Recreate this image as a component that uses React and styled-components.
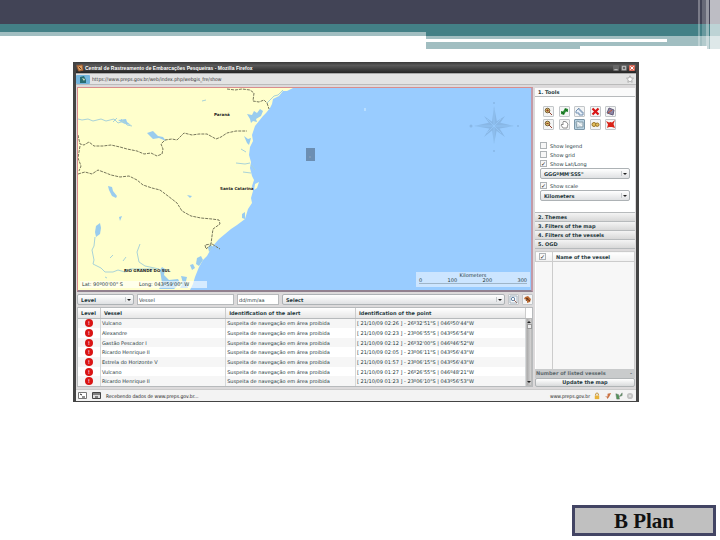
import React from 'react'
import styled, { createGlobalStyle } from 'styled-components'

const GlobalStyle = createGlobalStyle`
    * {
        box-sizing: border-box;
    }
    body {
        margin: 0;
        background: #fff;
    }
    input, select, button {
        font: inherit;
        color: inherit;
        margin: 0;
    }
`

/* ---------- slide ---------- */

const Slide = styled.div`
    min-height: 100vh;
    display: flex;
    flex-direction: column;
    font-family: "DejaVu Sans", sans-serif;
    font-size: 5px;
    line-height: 8px;
    color: #26393d;
`
const Banner = styled.header`
    position: relative;
    height: 62px;
`
const NavyBand = styled.div`
    height: 24px;
    background: #424456;
`
const BandRow = styled.div`
    display: flex;
`
const BandLeft = styled.div`
    width: 426px;
    height: 12px;
    background: #438086;
    border-bottom: 4px solid #a1bec1;
`
const BandRight = styled.div`
    flex: 1;
    height: 22px;
    background: #a1bec1;
    border-top: 12px solid #438086;
    padding-top: 3px;
`
const WhiteLine = styled.div`
    width: 82%;
    height: 3px;
    background: #fff;
`
const BandTail = styled.div`
    display: flex;
    justify-content: space-between;
    height: 3px;
    margin-left: 426px;
`
const Tail = styled.div`
    width: ${(p) => p.$w}px;
    background: #a1bec1;
`
const Stripes = styled.div`
    position: absolute;
    top: 0;
    right: 0;
    width: 22px;
    height: 49px;
    display: flex;
`
const Stripe = styled.div`
    width: ${(p) => p.$w}px;
    background: rgba(255, 255, 255, ${(p) => p.$o});
`
const Footer = styled.footer`
    display: flex;
    justify-content: flex-end;
    margin-top: auto;
    padding: 0 4px 4px;
`
const PlanButton = styled.button`
    width: 144px;
    height: 31px;
    padding: 0;
    border: 3px solid #424463;
    background: #c0c0c0;
    color: #111;
    font: bold 21px/24px "Liberation Serif", serif;
`

/* ---------- browser window ---------- */

const Window = styled.main`
    margin: 0 81px 0 73px;
    border: 1px solid #444;
    border-top: 0;
    border-left: 3px solid #444;
    border-right: 3px solid #444;
    background: #dedede;
`
const TitleBar = styled.div`
    height: 11px;
    display: flex;
    align-items: center;
    gap: 1px;
    background: linear-gradient(#383838, #5a5a5a 30%, #252525);
    color: #fff;
    font: bold 5px/10px "Liberation Sans", sans-serif;
`
const Grow = styled.span`
    flex: 1;
`
const WindowButton = styled.button`
    width: 6px;
    height: 6px;
    margin-right: 1px;
    padding: 0;
    border: 0;
    border-radius: 1px;
    background: ${(p) => (p.$close ? '#dc6a58' : '#666')};
    display: flex;
`
const AddressBar = styled.div`
    height: 12px;
    display: flex;
    align-items: center;
    gap: 2px;
    padding: 0 2px 0 0;
    border-top: 1px solid #aaa;
    border-bottom: 1px solid #bbb;
    background: #e3e3e3;
`
const Address = styled.input`
    flex: 1;
    min-width: 0;
    height: 9px;
    padding: 0;
    border: 0;
    background: transparent;
    color: #333;
    font: 5px/9px "DejaVu Sans Condensed", "DejaVu Sans", sans-serif;
`
const Content = styled.div`
    display: grid;
    grid-template-columns: minmax(0, 1fr) 100px;
    column-gap: 2px;
    padding: 2px 1px;
    background: #dcdadb;
`
const StatusBar = styled.div`
    height: 12px;
    display: flex;
    align-items: center;
    gap: 5px;
    padding: 0 2px;
    border-top: 1px solid #ccc;
    background: #f3f3f3;
    color: #222;
    font: 5px/10px "DejaVu Sans Condensed", "DejaVu Sans", sans-serif;
`
const StatusIcons = styled.span`
    display: flex;
    align-items: center;
    gap: 3px;
`

/* ---------- map ---------- */

const MapFrame = styled.section`
    position: relative;
    height: 205px;
    border: 1px solid #d98d8d;
    border-right: 2px solid #c39aa8;
    border-bottom: 2px solid #91808e;
    background: #99ccff;
`
const MapDrawing = styled.svg`
    display: block;
    width: 100%;
    height: 100%;
`
const Coordinates = styled.div`
    position: absolute;
    left: 2px;
    bottom: 2px;
    width: 127px;
    height: 7px;
    padding: 0 2px;
    display: flex;
    gap: 16px;
    background: rgba(255, 255, 255, 0.6);
    line-height: 7px;
`
const Scale = styled.div`
    position: absolute;
    right: 1px;
    bottom: 3px;
    width: 114px;
    height: 15px;
    padding: 0 3px;
    background: #cce5ff;
    text-align: center;
    line-height: 6px;
`
const ScaleNumbers = styled.div`
    display: flex;
    justify-content: space-between;
    height: 6px;
    border-bottom: 1px solid #9eb5c9;
    line-height: 5px;
`

/* ---------- controls ---------- */

const Filters = styled.form`
    display: flex;
    gap: 3px;
    padding: 2px 0;
`
const SelectBox = styled.div`
    position: relative;
    ${(p) => (p.$w ? `width: ${p.$w}px;` : 'flex: 1;')}
    height: 11px;
    margin-top: ${(p) => p.$gap || 0}px;
    &::before {
        content: '';
        position: absolute;
        right: 8px;
        top: 3px;
        height: 5px;
        border-left: 1px solid #c4c8cb;
    }
    &::after {
        content: '';
        position: absolute;
        right: 3px;
        top: 5px;
        border: 2px solid transparent;
        border-top: 2px solid #222;
        border-bottom: 0;
    }
`
const Select = styled.select`
    display: block;
    width: 100%;
    height: 11px;
    padding: 0 3px;
    appearance: none;
    border: 1px solid #adb2b5;
    border-radius: 2px;
    background: linear-gradient(#fff, #dfe1e3);
    font-weight: bold;
    line-height: 8px;
`
const TextBox = styled.input`
    width: ${(p) => p.$w}px;
    height: 11px;
    padding: 0 1px;
    border: 1px solid #b7babc;
    background: #fff;
`
const IconButton = styled.button`
    width: 11px;
    height: 11px;
    padding: 0;
    display: flex;
    align-items: center;
    justify-content: center;
    border: 1px solid ${(p) => (p.$on ? '#7c97a8' : '#c2c6c9')};
    border-radius: 1px;
    background: ${(p) => (p.$on ? '#b9d2e2' : '#f4f5f5')};
`

/* ---------- alerts ---------- */

const AlertsBox = styled.div`
    display: flex;
    height: 80px;
    border: 1px solid #b7babc;
    background: #fff;
`
const AlertTable = styled.table`
    flex: 1;
    min-width: 0;
    height: 78px;
    table-layout: fixed;
    border-collapse: collapse;
    th {
        height: 10px;
        padding: 0 3px;
        background: linear-gradient(#fff, #e6e6e6);
        border-bottom: 1px solid #b7babc;
        border-right: 1px solid #ccc;
        line-height: 8px;
        text-align: left;
        white-space: nowrap;
    }
    td {
        padding: 0 1px;
        border-right: 1px solid #d5d8da;
        line-height: 8px;
        white-space: nowrap;
    }
    tbody tr:nth-child(odd) {
        background: #f6f6f6;
    }
`
const Col = styled.col`
    width: ${(p) => p.$w}%;
`
const AlertDot = styled.div`
    width: 8px;
    height: 8px;
    margin: 0 auto;
    border-radius: 50%;
    background: #d91414;
    color: #ffc9c9;
    font-weight: bold;
    line-height: 8px;
    text-align: center;
`
const ScrollBar = styled.div`
    width: 6px;
    margin-top: 10px;
    display: flex;
    flex-direction: column;
    justify-content: space-between;
    align-items: center;
    padding: 2px 0;
    border: 1px solid #bbb;
    background: linear-gradient(90deg, #aaa, #d4d4d4);
`
const ScrollThumb = styled.div`
    width: 5px;
    height: 5px;
    margin: 1px 0 auto;
    border: 1px solid #999;
    background: #eee;
`
const ScrollArrow = styled.div`
    border: 2px solid transparent;
    border-${(p) => (p.$up ? 'bottom' : 'top')}-color: #222;
    border-${(p) => (p.$up ? 'top' : 'bottom')}: 0;
`

/* ---------- sidebar ---------- */

const Sidebar = styled.aside`
    display: flex;
    flex-direction: column;
    padding-top: 1px;
`
const SectionHead = styled.button`
    height: 9px;
    padding: 0 3px;
    border: 0;
    border-bottom: 1px solid #b7babc;
    background: ${(p) => (p.$open ? '#fafafa' : 'linear-gradient(#f4f4f4, #d8d8d8)')};
    font-weight: bold;
    line-height: 8px;
    text-align: left;
`
const Tools = styled.div`
    height: 116px;
    padding: 9px 5px 0;
    background: #fff;
    border-bottom: 1px solid #b7babc;
`
const ToolGrid = styled.div`
    display: grid;
    grid-template-columns: repeat(5, 11px);
    justify-content: space-between;
    row-gap: 2px;
    padding: 0 14px 11px 3px;
`
const CheckLine = styled.label`
    display: flex;
    align-items: center;
    gap: 3px;
    height: 9px;
    margin-top: ${(p) => p.$gap || 0}px;
`
const Check = styled.input.attrs({ type: 'checkbox' })`
    appearance: none;
    width: 7px;
    height: 7px;
    border: 1px solid #aeb3b6;
    background: #f7f7f7;
    &:checked::before {
        content: '✓';
        display: block;
        color: #222;
        font: bold 6px/5px "DejaVu Sans", sans-serif;
    }
`
const VesselTable = styled.table`
    height: 118px;
    margin-top: 2px;
    border-collapse: collapse;
    table-layout: fixed;
    background: #fff;
    th {
        height: 10px;
        padding: 0 3px;
        background: linear-gradient(#fff, #f0f0f0);
        border: 1px solid #ccc;
        text-align: left;
        white-space: nowrap;
        line-height: 8px;
    }
    td {
        padding: 0;
        border-right: 1px solid #ccc;
    }
    tbody tr:nth-child(odd) {
        background: #f7f7f7;
    }
    th:first-child {
        width: 17px;
    }
`
const Listed = styled.div`
    height: 9px;
    padding: 0 3px 0 1px;
    display: flex;
    justify-content: space-between;
    background: #c9cbcc;
    color: #5d686c;
    font-weight: bold;
`
const UpdateButton = styled.button`
    height: 9px;
    padding: 0;
    border: 1px solid #b0b4b6;
    border-radius: 2px;
    background: linear-gradient(#fff, #d9dbdc);
    font-weight: bold;
    line-height: 7px;
`

const Svg = ({ size = 9, children }) => (
    <svg width={size} height={size} viewBox="0 0 9 9" fill="none">{children}</svg>
)

const glyphs = {
    zoomIn: <Svg><circle cx="3.5" cy="3.5" r="2.3" fill="#d9bd68" stroke="#76613a" /><path d="M5 5l3 3M3.5 2.4v2.2M2.4 3.5h2.2" stroke="#943d2a" /></Svg>,
    refresh: <Svg><path d="M5 1l3 1v3L6 4.500 5 6l-1 2-3-1V4l2 .5L4 3z" fill="#278b31" /><path d="M2 5l2 2M5 2l2 2" stroke="#165c24" /></Svg>,
    move: <Svg><path d="M1 4l3-3v2h2v2h2v3H4V6H1z" fill="#e9f1fa" stroke="#7390b1" /></Svg>,
    cross: <Svg><path d="M1.5 1.5l6 6M7.5 1.5l-6 6" stroke="#d81515" strokeWidth="2.2" /></Svg>,
    layers: <Svg><path d="M3 1l5 2-1 5-6-2z" fill="#8e86a5" stroke="#635c7a" /><path d="M2 6l4-3" stroke="#c8502e" /></Svg>,
    zoomOut: <Svg><circle cx="3.5" cy="3.5" r="2.3" fill="#d9bd68" stroke="#76613a" /><path d="M5 5l3 3M2.4 3.5h2.2" stroke="#943d2a" /></Svg>,
    hand: <Svg><path d="M3 8L1 5l1-1 1 1V2l1-1 1 1 1-.5L7 3l1 1-1 4z" fill="#fff" stroke="#777" strokeWidth=".8" /></Svg>,
    select: <Svg><path d="M1 2l2-1 1 1h4v5H4L2 8z" fill="#d8e3e9" stroke="#78909c" strokeWidth=".8" /><path d="M3 3l4 3" stroke="#fff" /></Svg>,
    link: <Svg><circle cx="3" cy="4.5" r="2" fill="#e3bf5c" stroke="#9a7428" /><circle cx="6.3" cy="4.7" r="1.7" fill="#e3bf5c" stroke="#9a7428" /></Svg>,
    target: <Svg><path d="M0 1l3 1.500L4.500 2 6 2.500 9 0 7.500 4 9 8 6 7H3L1 8l1-3.500z" fill="#d92318" /></Svg>,
}

const tools = [
    ['zoomIn', 'Zoom in'], ['refresh', 'Refresh'], ['move', 'Measure'], ['cross', 'Clear'], ['layers', 'Layers'],
    ['zoomOut', 'Zoom out'], ['hand', 'Pan'], ['select', 'Select'], ['link', 'Find'], ['target', 'Remove'],
]

const alerts = [
    ['Vulcano', `[ 21/10/09 02:26 ] - 26º32'51"S | 046º50'44"W`],
    ['Alexandre', `[ 21/10/09 02:23 ] - 23º06'55"S | 043º56'54"W`],
    ['Gastão Pescador I', `[ 21/10/09 02:12 ] - 26º32'00"S | 046º46'52"W`],
    ['Ricardo Henrique II', `[ 21/10/09 02:05 ] - 23º06'11"S | 043º56'43"W`],
    ['Estrela do Horizonte V', `[ 21/10/09 01:57 ] - 23º06'15"S | 043º56'43"W`],
    ['Vulcano', `[ 21/10/09 01:27 ] - 26º26'55"S | 046º48'21"W`],
    ['Ricardo Henrique II', `[ 21/10/09 01:23 ] - 23º06'10"S | 043º56'53"W`],
]

const CoastMap = () => (
    <MapDrawing viewBox="78 88 453 202" preserveAspectRatio="xMinYMin slice">
        <path fill="#ffffcc" d="M78 88H293L287 91 283 91 279 96 273 99 272 104 270 108 266 113 263 116 259 121 255 126 252 135 253 141 250 147 249 155 251 162 250 168 252 176 254 180 252 186 253 191 251 198 252 203 248 209 245 219 237 225 231 229 225 234 219 239 212 247 207 256 203 260 199 267 195 277 193 284 190 290H78z" />
        <g fill="#99ccee">
            <path d="M247 114l5 1 2-4 3 2 3-4 3 2-2 5-5 3 1 3-4-1-2 2-1-4z" />
            <path d="M244 136l4 3 3-1-2 7-2-2z" />
            <path d="M108 186l4 1 1 4 4 5-1 2-4-2-3-6z" />
            <path d="M96 226l4-3 1 5-1 6-4 3-1-5z" />
            <path d="M119 217l3-1-2 5z" />
            <path d="M147 133l6-2 5 5 5 1 3 4-7-3-6 1z" />
            <path d="M197 258l4-2 2 4-4 6-3-2z" />
            <path d="M190 265l3-1 2 4-3 2z" />
            <path d="M208 247l3-2 2 2-4 5z" />
            <path d="M181 276l6 1-1 4 2 7h-8l3-5z" />
            <path d="M160 270l2-3 3 2-1 6 5 5 9-1 2 4-6 6h-15l3-6z" />
            <path d="M242 214l3-2v7l-3-1z" />
            <path d="M255 184l4-2-2 6-3 2z" fill="#ffffcc" />
            <path d="M187 195l5 1-2 2z" />
            <path d="M118 120l8-1 1 3 4 3-6-1-4-2z" />
        </g>
        <g fill="none" stroke="#a9d3d8" strokeWidth="1">
            <path d="M78 119l4 1 6-1 5 2 8-2 5 2 8-2 4 4 6-2 3 4 5 1M121 119l5 5M113 122l4-4" />
            <path d="M95 237l-1 9-2 4 2 10-1 4 8 4 4 4h8l5-2 7 2 5-3h24M140 244l-3 8 2 10 6 4 14 3" />
            <path d="M267 103l7-7 4-1 5-5M241 149l5 3M236 163l9 1 5-1M251 165l4 5" />
            <path d="M110 258l3-3M123 261l3-4M105 277l2 1M202 101l4-1M243 172l8 1" />
        </g>
        <g fill="none" stroke="#77775b" strokeWidth="1" strokeDasharray="3 1">
            <path d="M227 89l8 1 7-1 8 1 4 3-1 8 6 1 5-2 3 3 2 6" />
            <path d="M78 135l2 9 4 1 5-3 5 4 9 0 8-1 9 2 7 2 10 2 7 3 7-1 6 3 5-2 1-5-2-5 4-4 7-1 5 1 7-7 8 2 7-1 8 0 9 5 5-2 6-4 9-2 11 0" />
            <path d="M80 146l-2 12 3 8-2 5" />
            <path d="M78 174l7-2 7 2 6-4 8 3 5 2 9 2 9-1 8 4 6 5 9 3 8 2 8 6 9 7 5 8 9 5 10 2 11 1 7 1 1 4-7 5-1 7-1 8-6 1 1 4 6-5 8 5" />
        </g>
        <rect x="306" y="148" width="9" height="13" fill="#6c8eb2" />
        <path d="M309 157h2" stroke="#91a5ba" />
        <path d="M365 108v3" stroke="#b8deff" strokeWidth="2" />
        <g fill="#88b7e6">
            <path d="M494 106l3 16 17 4-17 3-3 15-2-15-18-3 18-4z" />
            <path d="M484 116l10 7 11-7-7 10 7 11-11-8-10 8 7-11z" />
            <circle cx="494" cy="103" r="1" /><circle cx="494" cy="151" r="1" />
            <circle cx="471" cy="126" r="1.500" /><circle cx="518" cy="126" r="1" />
        </g>
        <path d="M494 109v33M476 126h36M487 119l14 14M501 119l-14 14" stroke="#99ccff" strokeWidth=".6" />
        <g fill="#222" fontSize="4" fontWeight="bold">
            <text x="214" y="116">Paraná</text>
            <text x="220" y="190">Santa Catarina</text>
            <text x="124" y="272">RIO GRANDE DO SUL</text>
        </g>
    </MapDrawing>
)

const App = () => {
    return (
        <Slide>
            <GlobalStyle />
            <Banner>
                <NavyBand />
                <BandRow>
                    <BandLeft />
                    <BandRight>
                        <WhiteLine />
                    </BandRight>
                </BandRow>
                <BandTail>
                    <Tail $w={154} />
                    <Tail $w={13} />
                </BandTail>
                <Stripes>
                    <Stripe $w={2} $o={0.3} />
                    <Stripe $w={2} $o={0} />
                    <Stripe $w={4} $o={0.2} />
                    <Stripe $w={3} $o={0.45} />
                    <Stripe $w={1} $o={0} />
                    <Stripe $w={10} $o={0.65} />
                </Stripes>
            </Banner>

            <Window>
                <TitleBar>
                    <Svg size={8}><path d="M1 2l6-1 1 6-5 1z" fill="#dba164" stroke="#a25a2e" /><path d="M3 3l3 3" stroke="#5a2c15" /></Svg>
                    Central de Rastreamento de Embarcações Pesqueiras - Mozilla Firefox
                    <Grow />
                    <WindowButton aria-label="Minimize"><Svg size={6}><path d="M2 7h5" stroke="#eee" /></Svg></WindowButton>
                    <WindowButton aria-label="Maximize"><Svg size={6}><path d="M2 2h5v5H2z" stroke="#eee" /></Svg></WindowButton>
                    <WindowButton $close aria-label="Close"><Svg size={6}><path d="M2 2l5 5M7 2L2 7" stroke="#fff" strokeWidth="1.5" /></Svg></WindowButton>
                </TitleBar>
                <AddressBar>
                    <svg width="14" height="9" viewBox="0 0 14 9"><rect width="14" height="9" rx="1" fill="#73b5dd" /><path d="M4 2l4-1 2 4v3H4z" fill="#286d72" /><path d="M6 3l3 1-1 2z" fill="#d6e6c0" /></svg>
                    <Address aria-label="Address" defaultValue="https://www.preps.gov.br/web/index.php/webgis_fre/show" />
                    <svg width="8" height="8" viewBox="0 0 9 9"><path d="M4.5.8l1.1 2.5 2.8.3-2 1.9.5 2.7-2.4-1.3-2.4 1.3.5-2.7-2-1.9 2.8-.3z" fill="#fff" stroke="#999" strokeWidth=".8" /></svg>
                </AddressBar>

                <Content>
                    <div>
                        <MapFrame>
                            <CoastMap />
                            <Coordinates>
                                <span>Lat: 90º00'00" S</span>
                                <span>Long: 043º59'00" W</span>
                            </Coordinates>
                            <Scale>
                                Kilometers
                                <ScaleNumbers>
                                    <span>0</span><span>100</span><span>200</span><span>300</span>
                                </ScaleNumbers>
                            </Scale>
                        </MapFrame>
                        <Filters>
                            <SelectBox $w={57}>
                                <Select aria-label="Level"><option>Level</option></Select>
                            </SelectBox>
                            <TextBox $w={97} aria-label="Vessel" defaultValue="Vessel" />
                            <TextBox $w={42} aria-label="Date" defaultValue="dd/mm/aa" />
                            <SelectBox>
                                <Select aria-label="Point"><option>Select</option></Select>
                            </SelectBox>
                            <IconButton type="button" aria-label="Search"><Svg><path d="M1 1h7v7H1z" fill="#f7fafc" stroke="#a4b2be" /><circle cx="4" cy="4" r="1.7" stroke="#6786a5" /><path d="M5 5l3 3" stroke="#9d7168" /></Svg></IconButton>
                            <IconButton type="button" aria-label="Clean"><Svg><path d="M2 2l3-1 3 3-1 3-3 1V5L1 4z" fill="#bd6c35" /><path d="M3 3l4 3M3 6l2-3" stroke="#673615" /></Svg></IconButton>
                        </Filters>
                        <AlertsBox>
                            <AlertTable>
                                <colgroup>
                                    <Col $w={5} /><Col $w={28} /><Col $w={29} /><Col $w={38} />
                                </colgroup>
                                <thead>
                                    <tr>
                                        <th>Level</th>
                                        <th>Vessel</th>
                                        <th>Identification of the alert</th>
                                        <th>Identification of the point</th>
                                    </tr>
                                </thead>
                                <tbody>
                                    {alerts.map(([vessel, point], i) => (
                                        <tr key={i}>
                                            <td><AlertDot>!</AlertDot></td>
                                            <td>{vessel}</td>
                                            <td>Suspeita de navegação em área proibida</td>
                                            <td>{point}</td>
                                        </tr>
                                    ))}
                                </tbody>
                            </AlertTable>
                            <ScrollBar>
                                <ScrollArrow $up />
                                <ScrollThumb />
                                <ScrollArrow />
                            </ScrollBar>
                        </AlertsBox>
                    </div>

                    <Sidebar>
                        <SectionHead $open>1. Tools</SectionHead>
                        <Tools>
                            <ToolGrid>
                                {tools.map(([icon, label]) => (
                                    <IconButton key={icon} $on={icon === 'select'} aria-label={label}>{glyphs[icon]}</IconButton>
                                ))}
                            </ToolGrid>
                            <CheckLine><Check />Show legend</CheckLine>
                            <CheckLine><Check />Show grid</CheckLine>
                            <CheckLine><Check defaultChecked />Show Lat/Long</CheckLine>
                            <SelectBox $w={90}>
                                <Select aria-label="Coordinate format"><option>GGGºMM'SSS"</option></Select>
                            </SelectBox>
                            <CheckLine $gap={2}><Check defaultChecked />Show scale</CheckLine>
                            <SelectBox $w={90}>
                                <Select aria-label="Scale unit"><option>Kilometers</option></Select>
                            </SelectBox>
                        </Tools>
                        <SectionHead>2. Themes</SectionHead>
                        <SectionHead>3. Filters of the map</SectionHead>
                        <SectionHead>4. Filters of the vessels</SectionHead>
                        <SectionHead>5. OGD</SectionHead>
                        <VesselTable>
                            <thead>
                                <tr>
                                    <th><Check defaultChecked aria-label="All vessels" /></th>
                                    <th>Name of the vessel</th>
                                </tr>
                            </thead>
                            <tbody>
                                {Array.from({ length: 11 }, (_, i) => (
                                    <tr key={i}><td /><td /></tr>
                                ))}
                            </tbody>
                        </VesselTable>
                        <Listed><span>Number of listed vessels</span><span>-</span></Listed>
                        <UpdateButton>Update the map</UpdateButton>
                    </Sidebar>
                </Content>

                <StatusBar>
                    <svg width="9" height="7" viewBox="0 0 9 7"><path d="M.5.5h8v6h-8z" fill="#fff" stroke="#777" /><path d="M2 2l2 1M4 5h3" stroke="#222" /></svg>
                    <svg width="9" height="7" viewBox="0 0 9 7"><path d="M.5.5h8v6h-8z" fill="#ddd" stroke="#444" /><path d="M1 2h7M3 5h3" stroke="#222" /></svg>
                    Recebendo dados de www.preps.gov.br...
                    <Grow />
                    <StatusIcons>
                        www.preps.gov.br
                        <Svg size={8}><path d="M3 4V2l1.5-1L6 2v2" stroke="#b8862a" /><path d="M2 4h5v4H2z" fill="#e8b23a" /></Svg>
                        <Svg size={8}><path d="M1 5l3 0 0-3 4-1-2 4-2 3-1-2z" fill="#c97143" /></Svg>
                        <Svg size={8}><path d="M1 2l3 1 1 5H2zM5 5l3-4v3z" fill="#4f9656" stroke="#66766a" strokeWidth=".6" /></Svg>
                        <Svg size={8}><circle cx="4.5" cy="4.5" r="3.5" fill="#c2c2c2" /><circle cx="4.5" cy="4.5" r="1.5" fill="#ddd" /></Svg>
                    </StatusIcons>
                </StatusBar>
            </Window>

            <Footer>
                <PlanButton>B Plan</PlanButton>
            </Footer>
        </Slide>
    )
}

export default App
